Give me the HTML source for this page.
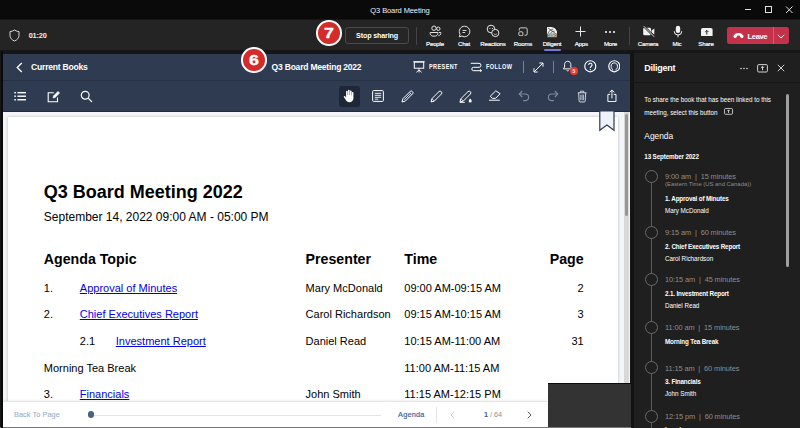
<!DOCTYPE html>
<html>
<head>
<meta charset="utf-8">
<title>Q3 Board Meeting</title>
<style>
*{box-sizing:border-box;margin:0;padding:0}
html,body{width:800px;height:428px;overflow:hidden;background:#1a1a1a;font-family:"Liberation Sans",sans-serif;}
.abs{position:absolute}
#root{position:relative;width:800px;height:428px;overflow:hidden;background:#161616}
#titlebar{left:0;top:0;width:800px;height:19.800px;background:#0a0a0a}
#titlebar .t{left:0;width:800px;top:4.600px;text-align:center;color:#f0f0f0;font-size:7.500px;line-height:11px;letter-spacing:-0.1px}
#toolbar{left:0;top:20px;width:800px;height:30.400px;background:#242424;box-shadow:0 -0.600px 0 #242424}
.lbl{position:absolute;color:#fff;-webkit-text-stroke:.18px #fff;font-size:6.1px;line-height:8px;text-align:center;width:40px;top:40px;letter-spacing:-0.2px}
.sep{position:absolute;width:1px;background:#444;top:27px;height:18px}
#app{left:3.300px;top:54px;width:627.200px;height:372.700px;background:#f4f5f7;overflow:hidden}
#h1{left:0;top:0;width:629px;height:26px;background:#2f3b50}
#h2{left:0;top:26px;width:629px;height:32.300px;background:#2f3b50;border-top:1px solid #263145}
.wt{color:#fff}
#page{left:4.700px;top:62.800px;width:610px;height:320px;background:#fff;box-shadow:0 0 2.500px rgba(60,70,90,.35)}
#doc{font-family:"Liberation Sans",sans-serif;color:#000}
#bottom{left:0;top:346.500px;width:543.300px;height:27px;background:#fff;border-top:1px solid #e3e5e8;box-shadow:0 -1px 2px rgba(0,0,0,.06)}
#panel{left:632px;top:52.500px;width:168px;height:375.500px;background:#1f1f1f}
#panel>*{margin-top:1.500px}
#panel>.tm,#panel>.tt,#panel>.pr{margin-top:2.300px}#panel>.tz{margin-top:1.800px}
.pt{position:absolute;color:#fff;white-space:nowrap}
.circ{position:absolute;border-radius:50%;background:#d42b2b;border:2.100px solid #fff;color:#fff;font-weight:bold;text-align:center;font-size:14.600px;line-height:23.800px}
.circ span{display:inline-block;position:relative;left:.6px;transform:scaleX(1.22);-webkit-text-stroke:.35px #fff}
a{color:#0000ee;text-decoration:underline}
.dh{font-size:14.200px;line-height:19px;font-weight:bold;white-space:nowrap}
.dr{font-size:11.020px;line-height:16px;white-space:nowrap}
.sm{font-size:6.300px;line-height:8px;letter-spacing:0}
.tcirc{position:absolute;left:12.800px;width:13px;height:13px;border-radius:50%;border:1px solid #6a6a6a;background:#1f1f1f}
.tm{left:33px;font-size:7.400px;line-height:10px;color:#8e8e8e;letter-spacing:-0.1px}
.tz{left:33px;font-size:5.900px;line-height:7px;color:#8e8e8e;letter-spacing:0}
.tt{left:33px;font-size:6.300px;line-height:8px;font-weight:bold;letter-spacing:-0.17px}
.pr{left:33px;font-size:6.300px;line-height:8px;letter-spacing:-0.03px}
</style>
</head>
<body>
<div id="root">
  <div id="titlebar" class="abs">
    <div class="t abs">Q3 Board Meeting</div>
    <svg class="abs" style="left:735px;top:0" width="65" height="20" viewBox="0 0 65 20" fill="none" stroke="#e0e0e0" stroke-width="1">
      <path d="M10 9.5h6"/><rect x="30.5" y="6.500" width="6" height="6"/><path d="M51 6.500l6.500 6.500M57.500 6.500l-6.500 6.500"/>
    </svg>
  </div>
  <div id="toolbar" class="abs">
    <!-- shield + timer -->
    <svg class="abs" style="left:9px;top:9px" width="11" height="13" viewBox="0 0 11 13" fill="none" stroke="#d6d6d6" stroke-width="1"><path d="M5.500 1C4.200 2 2.600 2.500 1 2.600V6.500c0 2.600 1.800 4.400 4.500 5.500 2.700-1.100 4.500-2.900 4.500-5.500V2.600C8.400 2.500 6.800 2 5.500 1z"/></svg>
    <div class="abs" style="left:28.700px;top:12.400px;color:#f0f0f0;font-size:7.300px;line-height:8px;font-weight:bold;letter-spacing:-0.15px">01:20</div>
    <div class="circ" style="left:316px;top:0px;width:25.700px;height:25.700px"><span>7</span></div>
    <div class="abs" style="left:345px;top:7px;width:64px;height:17px;border:1px solid #4a4a4a;border-radius:3px;background:#262626;color:#fff;font-size:7.150px;font-weight:bold;line-height:16.600px;text-align:center;letter-spacing:-0.15px">Stop sharing</div>
    <div class="sep" style="left:416px;top:7px"></div>
    <div class="sep" style="left:629px;top:7px"></div>
    <!-- People -->
    <svg class="abs" style="left:429px;top:5px" width="13" height="12" viewBox="0 0 13 12" fill="none" stroke="#e6e6e6" stroke-width="1"><circle cx="5" cy="3.200" r="2.200"/><circle cx="9.300" cy="3.800" r="1.700"/><path d="M1.200 7.500h7.600v1.200c0 1.500-1.600 2.500-3.800 2.500s-3.800-1-3.800-2.500z"/><path d="M9.800 7.500h2v1c0 1.200-.9 2-2.300 2.100"/></svg>
    <div class="lbl" style="left:415px;top:19.500px">People</div>
    <!-- Chat -->
    <svg class="abs" style="left:458px;top:5px" width="13" height="13" viewBox="0 0 13 13" fill="none" stroke="#e6e6e6" stroke-width="1"><path d="M6.500 1.200a5.300 5.300 0 1 1-2.600 9.900L1.300 11.800l.7-2.600A5.300 5.300 0 0 1 6.500 1.200z"/><path d="M4.500 5.500h4M4.500 7.500h2.600" stroke-width=".9"/></svg>
    <div class="lbl" style="left:444px;top:19.500px">Chat</div>
    <!-- Reactions -->
    <svg class="abs" style="left:486px;top:4px" width="14" height="14" viewBox="0 0 14 14" fill="none" stroke="#e6e6e6" stroke-width="1"><circle cx="5" cy="5" r="3.800"/><circle cx="9.300" cy="9" r="3.600" fill="#242424"/><path d="M7.800 9.800c.8.900 2.200.9 3 0" stroke-width=".8"/><path d="M3.300 4.500h1.200M5.800 4.500H7" stroke-width=".8"/></svg>
    <div class="lbl" style="left:473px;top:19.500px">Reactions</div>
    <!-- Rooms -->
    <svg class="abs" style="left:517.700px;top:6.700px" width="10.500" height="9.600" viewBox="0 0 12 11" fill="none" stroke="#e6e6e6" stroke-width="1"><path d="M1.500 4V2.500a1.500 1.500 0 0 1 1.500-1.500h6a1.500 1.500 0 0 1 1.500 1.500v5.500a1.500 1.500 0 0 1-1.500 1.500H7.500"/><rect x="1" y="5.500" width="4.500" height="4.500" rx="1"/></svg>
    <div class="lbl" style="left:503px;top:19.500px">Rooms</div>
    <!-- Diligent -->
    <svg class="abs" style="left:546.500px;top:7px" width="10.600" height="10.800" viewBox="0 0 10.600 10.800"><path d="M0 .6A.6 .6 0 0 1 .6 0H4.200C7.800 .3 10.200 2.800 10.400 6.800H0z" fill="#f2f2f2"/><path d="M1.200 1.200L8.600 6.600M1.300 6.500C1.600 4 3.400 2.300 6.200 2.300M3.600 6.600C3.900 5.200 5 4.300 7.600 4.300" fill="none" stroke="#4a4a4a" stroke-width=".8"/><rect x="0" y="7.100" width="10.600" height="3.700" rx=".6" fill="#4a4a4a"/><text x="5.300" y="10" font-size="3.100" fill="#e8e8e8" text-anchor="middle" font-family="Liberation Sans, sans-serif" font-weight="bold">DEMO</text></svg>
    <div class="lbl" style="left:532px;top:19.500px">Diligent</div>
    <div class="abs" style="left:543.500px;top:29px;width:17px;height:1.800px;background:#7579dc;border-radius:1px"></div>
    <!-- Apps -->
    <svg class="abs" style="left:575.400px;top:6px" width="11" height="11" viewBox="0 0 11 11" fill="none" stroke="#e6e6e6" stroke-width="1"><path d="M5.500 .5v10M.5 5.500h10"/></svg>
    <div class="lbl" style="left:561.200px;top:19.500px">Apps</div>
    <!-- More -->
    <svg class="abs" style="left:604px;top:10px" width="12" height="4" viewBox="0 0 12 4" fill="#f0f0f0"><circle cx="2" cy="2" r="1.100"/><circle cx="6" cy="2" r="1.100"/><circle cx="10" cy="2" r="1.100"/></svg>
    <div class="lbl" style="left:590.500px;top:19.500px">More</div>
    <!-- Camera -->
    <svg class="abs" style="left:642px;top:5.200px" width="14" height="13" viewBox="0 0 14 13"><path d="M1.200 4a1.300 1.300 0 0 1 1.300-1.300h5.200a1.300 1.300 0 0 1 1.300 1.300v5a1.300 1.300 0 0 1-1.300 1.300H2.500A1.300 1.300 0 0 1 1.200 9z" fill="#f2f2f2"/><path d="M9.500 5.400l2.800-1.900v6l-2.800-1.900z" fill="#f2f2f2"/><path d="M2.200 1.600l9.800 10" stroke="#242424" stroke-width="2.200"/><path d="M1.800 1.200l10.400 10.600" stroke="#f2f2f2" stroke-width=".9"/></svg>
    <div class="lbl" style="left:628px;top:19.500px">Camera</div>
    <!-- Mic -->
    <svg class="abs" style="left:672.700px;top:5.200px" width="10" height="13" viewBox="0 0 10 13"><rect x="2.800" y=".8" width="4.400" height="7.200" rx="2.200" fill="#f2f2f2"/><path d="M1.200 6.200a3.800 3.800 0 0 0 7.600 0M5 10v2.200" fill="none" stroke="#f2f2f2" stroke-width="1"/></svg>
    <div class="lbl" style="left:657px;top:19.500px">Mic</div>
    <!-- Share -->
    <svg class="abs" style="left:701.200px;top:7.500px" width="11.600" height="8.800" viewBox="0 0 11.600 8.800"><rect x="0" y="0" width="11.600" height="8.800" rx="1.700" fill="#f2f2f2"/><path d="M5.800 6.600V2.600M4.200 4l1.600-1.600 1.600 1.600" fill="none" stroke="#242424" stroke-width="1"/></svg>
    <div class="lbl" style="left:686px;top:19.500px">Share</div>
    <!-- Leave -->
    <div class="abs" style="left:727.300px;top:7.400px;width:62.200px;height:16.600px;background:#c4314b;border-radius:2.500px"></div>
    <div class="abs" style="left:773px;top:7.400px;width:1px;height:16.600px;background:#d55f74"></div>
    <svg class="abs" style="left:733px;top:12.300px" width="11" height="7" viewBox="0 0 11 7"><path d="M.6 3.700C1.800 1.700 3.600 1 5.500 1s3.700.7 4.900 2.700c.3.600.1 1.300-.3 1.700l-.6.500c-.4.300-.9.200-1.300-.1L7.300 5c-.3-.3-.4-.7-.3-1.100-.9-.4-2.100-.4-3 0 .1.400 0 .8-.3 1.100l-.9.800c-.4.300-.9.400-1.300.1l-.6-.5C.5 5 .3 4.300.6 3.700z" fill="#fff"/></svg>
    <div class="abs" style="left:747.600px;top:11.900px;color:#fff;font-size:7.700px;font-weight:bold;line-height:9px;letter-spacing:-0.45px">Leave</div>
    <svg class="abs" style="left:776.600px;top:13.500px" width="8" height="5" viewBox="0 0 8 5" fill="none" stroke="#fff" stroke-width="1"><path d="M.8 .8L4 4 7.200 .8"/></svg>
  </div>

  <div id="app" class="abs">
    <div id="h1" class="abs">
      <svg class="abs" style="left:12.500px;top:8px" width="7" height="11" viewBox="0 0 7 11" fill="none" stroke="#fff" stroke-width="1.300"><path d="M5.800 1L1.200 5.500 5.800 10"/></svg>
      <div class="abs wt" style="left:27.800px;top:7.500px;font-size:8.600px;line-height:11px;font-weight:bold;letter-spacing:-0.25px;white-space:nowrap">Current Books</div>
      <div class="abs wt" id="ttl" style="left:268.300px;top:7.500px;font-size:8.500px;line-height:11px;font-weight:bold;letter-spacing:-0.2px;white-space:nowrap">Q3 Board Meeting 2022</div>
      <!-- present -->
      <svg class="abs" style="left:410px;top:7px" width="12" height="12" viewBox="0 0 12 12" fill="none" stroke="#fff" stroke-width="1"><path d="M.3 .8h11.400"/><rect x="1.300" y="1" width="9.400" height="6.200"/><path d="M6 7.200v2M6 9l-2.600 2.300M6 9l2.600 2.300M6 9v2.500" stroke-width=".9"/></svg>
      <div class="abs wt" style="left:425.900px;top:8.600px;font-size:7px;line-height:8px;font-weight:bold;letter-spacing:.5px;white-space:nowrap;transform:scaleX(.79);transform-origin:0 0">PRESENT</div>
      <!-- follow -->
      <svg class="abs" style="left:467px;top:7.800px" width="13" height="10" viewBox="0 0 13 10" fill="none" stroke="#fff" stroke-width="1"><path d="M.8 1.300h8.200a2 2 0 0 1 0 4H3.500a1.700 1.700 0 0 0 0 3.400h8"/><path d="M10 7.200l1.600 1.500L10 10.200" stroke-width=".9"/></svg>
      <div class="abs wt" style="left:483.100px;top:8.600px;font-size:7px;line-height:8px;font-weight:bold;letter-spacing:.5px;white-space:nowrap;transform:scaleX(.79);transform-origin:0 0">FOLLOW</div>
      <div class="abs" style="left:520px;top:7px;width:1px;height:12px;background:#76809a"></div>
      <!-- expand -->
      <svg class="abs" style="left:529.500px;top:7.500px" width="11" height="11" viewBox="0 0 11 11" fill="none" stroke="#fff" stroke-width="1"><path d="M1 10L10 1M6.300 1H10v3.700M1 6.300V10h3.700"/></svg>
      <div class="abs" style="left:550px;top:7px;width:1px;height:12px;background:#76809a"></div>
      <!-- bell -->
      <svg class="abs" style="left:558.500px;top:6.100px" width="11.400" height="12.600" viewBox="0 0 12 13" fill="none" stroke="#fff" stroke-width="1"><path d="M6 1.200c-2 0-3.300 1.500-3.300 3.500v2.600L1.500 9.200h9L9.300 7.300V4.700C9.300 2.700 8 1.200 6 1.200z"/><path d="M4.800 10.800c.3.700 2.100.7 2.400 0"/></svg>
      <div class="abs" style="left:566.400px;top:12.600px;width:8.400px;height:8.400px;border-radius:50%;background:#f0392b;color:#fff;font-size:5px;line-height:8.400px;text-align:center;font-weight:bold">5</div>
      <!-- help -->
      <svg class="abs" style="left:581.200px;top:6.100px" width="12.600" height="12.600" viewBox="0 0 13 13" fill="none" stroke="#fff" stroke-width="1.200"><circle cx="6.500" cy="6.500" r="5.700"/><path d="M4.800 5.200a1.750 1.750 0 1 1 2.600 1.500c-.6.400-.9.700-.9 1.500" stroke-width="1.100"/><circle cx="6.500" cy="9.900" r=".7" fill="#fff" stroke="none"/></svg>
      <!-- user -->
      <svg class="abs" style="left:604.300px;top:6.100px" width="12.600" height="12.600" viewBox="0 0 13 13" fill="none" stroke="#fff" stroke-width="1.200"><circle cx="6.500" cy="6.500" r="5.700"/><path d="M4.600 10.800v-1.300c-1.200-.9-1.400-2.200-1.400-3.200 0-1.900 1.400-3.300 3.300-3.300s3.300 1.400 3.300 3.300c0 1-.2 2.300-1.400 3.200v1.300" stroke-width="1"/></svg>
    </div>
    <div id="h2" class="abs">
      <!-- list -->
      <svg class="abs" style="left:10.300px;top:10px" width="12.400" height="10.500" viewBox="0 0 13 11" fill="#fff"><rect x=".3" y="1" width="1.700" height="1.500"/><rect x=".3" y="4.700" width="1.700" height="1.500"/><rect x=".3" y="8.400" width="1.700" height="1.500"/><rect x="3.600" y="1" width="9" height="1.500"/><rect x="3.600" y="4.700" width="9" height="1.500"/><rect x="3.600" y="8.400" width="9" height="1.500"/></svg>
      <!-- edit -->
      <svg class="abs" style="left:43.500px;top:8.500px" width="14" height="13" viewBox="0 0 14 13" fill="none" stroke="#fff" stroke-width="1.100"><path d="M10.500 7.500v4.300H1.200V2.800h5.600"/><path d="M6 8l.6-2.200L11 1.400l1.600 1.600L8.200 7.400z" fill="#fff" stroke-width=".6"/></svg>
      <!-- search -->
      <svg class="abs" style="left:77px;top:9px" width="13" height="13" viewBox="0 0 13 13" fill="none" stroke="#fff" stroke-width="1.200"><circle cx="5.200" cy="5.200" r="3.900"/><path d="M8.200 8.200L12 12"/></svg>
      <!-- hand -->
      <div class="abs" style="left:336px;top:5px;width:20.500px;height:20.500px;background:#1e2737;border-radius:3px"></div>
      <svg class="abs" style="left:339.600px;top:7.600px" width="12" height="14" viewBox="0 0 12 14" fill="#fff"><path d="M3.100 7V2.500a.8.800 0 0 1 1.600 0V6h.35V1.500a.8.800 0 0 1 1.600 0V6H7V2.200a.8.800 0 0 1 1.600 0V6.500h.35V3.800a.75.750 0 0 1 1.500 0V9c0 2.600-1.700 4.300-4 4.300-1.700 0-2.700-.7-3.500-2L.9 7.900C.5 7.200 1.400 6.500 2 7.200l1.100 1.300z"/></svg>
      <!-- note -->
      <svg class="abs" style="left:369px;top:8.500px" width="12" height="12" viewBox="0 0 12 12" fill="none" stroke="#fff" stroke-width="1"><rect x=".6" y=".6" width="10.800" height="10.800" rx="1"/><path d="M2.800 3.300h6.400M2.800 5.300h6.400M2.800 7.300h6.400M2.800 9.200h3.500" stroke-width=".9"/></svg>
      <!-- pen -->
      <svg class="abs" style="left:397.500px;top:9px" width="13" height="13" viewBox="0 0 13 13" fill="none" stroke="#fff" stroke-width="1"><path d="M1 12l.9-3.300 7.300-7.300a1.400 1.400 0 0 1 2 0l.4.400a1.400 1.400 0 0 1 0 2L4.300 11.100z"/><path d="M3.200 9.800l6.600-6.600" stroke-width=".8"/><path d="M8.300 2.300l2.400 2.400" stroke-width=".8"/></svg>
      <!-- pencil -->
      <svg class="abs" style="left:426.500px;top:9px" width="13" height="13" viewBox="0 0 13 13" fill="none" stroke="#fff" stroke-width="1"><path d="M1 12l.9-3.300 7.100-7.100a1.700 1.700 0 0 1 2.400 2.400L4.300 11.100z"/><path d="M1.900 8.700l2.400 2.400" stroke-width=".8"/></svg>
      <!-- highlighter -->
      <svg class="abs" style="left:455.500px;top:9px" width="14" height="13" viewBox="0 0 14 13" fill="none" stroke="#fff" stroke-width="1"><path d="M1 12l.9-3.300 7.100-7.100a1.700 1.700 0 0 1 2.400 2.400L4.300 11.100z"/><path d="M1.900 8.700l2.400 2.400" stroke-width=".8"/><path d="M.8 12.400h5" stroke-width=".9"/><path d="M11.200 8.600c.9 1 1.500 1.700 1.500 2.500a1.500 1.500 0 0 1-3 0c0-.8.600-1.500 1.500-2.500z" fill="#fff" stroke="none"/></svg>
      <!-- eraser -->
      <svg class="abs" style="left:485px;top:9px" width="14" height="12" viewBox="0 0 14 12" fill="none" stroke="#fff" stroke-width="1"><path d="M2.200 6.300L7.800 .8l4.300 2.900L7.700 8.300H4.300z"/><path d="M1 10.200h10.800"/></svg>
      <!-- undo -->
      <svg class="abs" style="left:514.800px;top:8.800px" width="12" height="12" viewBox="0 0 12 12" fill="none" stroke="#7f8aa0" stroke-width="1.100"><path d="M4.200 1L1.200 4l3 3"/><path d="M1.500 4h5.800a3.300 3.300 0 0 1 0 6.600H5.200"/></svg>
      <!-- redo -->
      <svg class="abs" style="left:543.800px;top:8.800px" width="12" height="12" viewBox="0 0 12 12" fill="none" stroke="#7f8aa0" stroke-width="1.100"><path d="M7.800 1l3 3-3 3"/><path d="M10.500 4H4.700a3.300 3.300 0 0 0 0 6.600h2.100"/></svg>
      <!-- trash -->
      <svg class="abs" style="left:574px;top:8.800px" width="10.300" height="13" viewBox="0 0 11 14" fill="none" stroke="#dfe3ea" stroke-width="1"><path d="M.8 3h9.400M3.800 2.700V1.300h3.400v1.400"/><path d="M1.700 3.200l.5 8.600c0 .6.500 1.100 1.100 1.100h4.400c.6 0 1.100-.5 1.100-1.100l.5-8.600"/><path d="M4 5v6M5.500 5v6M7 5v6" stroke-width=".8"/></svg>
      <!-- share -->
      <svg class="abs" style="left:603.400px;top:7.700px" width="9.900" height="13.500" viewBox="0 0 11 15" fill="none" stroke="#fff" stroke-width="1.100"><path d="M3.500 6H1v8h9V6H7.500"/><path d="M5.500 10.500V1.200M2.800 3.800L5.500 1.200l2.700 2.600"/></svg>
    </div>
    <div id="page" class="abs">
      <div id="doc" class="abs" style="left:.3px;top:.2px">
        <div class="abs" id="dtitle" style="left:35.500px;top:63.400px;font-size:18px;line-height:24px;font-weight:bold;white-space:nowrap">Q3 Board Meeting 2022</div>
        <div class="abs" id="dsub" style="left:35.500px;top:91.800px;font-size:12px;line-height:16px;white-space:nowrap">September 14, 2022 09:00 AM - 05:00 PM</div>
        <div class="abs dh" style="left:35.500px;top:132.800px">Agenda Topic</div>
        <div class="abs dh" style="left:297.300px;top:132.800px">Presenter</div>
        <div class="abs dh" style="left:396px;top:132.800px">Time</div>
        <div class="abs dh" style="left:475.400px;width:100px;text-align:right;top:132.800px">Page</div>

        <div class="abs dr" style="left:35.500px;top:162.800px">1.</div>
        <div class="abs dr" style="left:71.500px;top:162.800px"><a>Approval of Minutes</a></div>
        <div class="abs dr" style="left:297.300px;top:162.800px">Mary McDonald</div>
        <div class="abs dr" style="left:396px;top:162.800px">09:00 AM-09:15 AM</div>
        <div class="abs dr" style="left:475.400px;width:100px;text-align:right;top:162.800px">2</div>

        <div class="abs dr" style="left:35.500px;top:189.400px">2.</div>
        <div class="abs dr" style="left:71.500px;top:189.400px"><a>Chief Executives Report</a></div>
        <div class="abs dr" style="left:297.300px;top:189.400px">Carol Richardson</div>
        <div class="abs dr" style="left:396px;top:189.400px">09:15 AM-10:15 AM</div>
        <div class="abs dr" style="left:475.400px;width:100px;text-align:right;top:189.400px">3</div>

        <div class="abs dr" style="left:71.500px;top:216.100px">2.1</div>
        <div class="abs dr" style="left:107.500px;top:216.100px"><a>Investment Report</a></div>
        <div class="abs dr" style="left:297.300px;top:216.100px">Daniel Read</div>
        <div class="abs dr" style="left:396px;top:216.100px">10:15 AM-11:00 AM</div>
        <div class="abs dr" style="left:475.400px;width:100px;text-align:right;top:216.100px">31</div>

        <div class="abs dr" style="left:35.500px;top:242.700px">Morning Tea Break</div>
        <div class="abs dr" style="left:396px;top:242.700px">11:00 AM-11:15 AM</div>

        <div class="abs dr" style="left:35.500px;top:269.300px">3.</div>
        <div class="abs dr" style="left:71.500px;top:269.300px"><a>Financials</a></div>
        <div class="abs dr" style="left:297.300px;top:269.300px">John Smith</div>
        <div class="abs dr" style="left:396px;top:269.300px">11:15 AM-12:15 PM</div>
      </div>
    </div>
    <div class="abs" style="left:620.700px;top:57.500px;width:5.200px;height:300px;background:#d8d8d8"></div>
    <div class="abs" style="left:621.700px;top:59.500px;width:3.200px;height:102.500px;background:#979797;border-radius:1.600px"></div>
    <div class="abs" style="left:0;top:57.200px;width:628px;height:1.200px;background:#1f2a3d"></div>
    <svg class="abs" style="left:595.700px;top:57px" width="17" height="21" viewBox="0 0 17 21"><path d="M.8 0V19.200L7.900 14 15 19.200V0z" fill="#eef3fb" stroke="#2c3a55" stroke-width="1.200"/></svg>
    <div id="bottom" class="abs">
      <div class="abs" style="left:10.700px;top:8.800px;font-size:7.250px;line-height:9px;color:#9db0cc;-webkit-text-stroke:.12px #9db0cc;white-space:nowrap;letter-spacing:.1px">Back To Page</div>
      <div class="abs" style="left:91px;top:13px;width:287px;height:1px;background:#d9e6f5"></div>
      <div class="abs" style="left:84.300px;top:9.800px;width:6.900px;height:6.900px;border-radius:50%;background:#4a6088"></div>
      <div class="abs" style="left:394.800px;top:8.900px;font-size:7.400px;line-height:9px;color:#3b5a9a;-webkit-text-stroke:.15px #3b5a9a;white-space:nowrap;letter-spacing:.15px">Agenda</div>
      <div class="abs" style="left:433px;top:5px;width:1px;height:16px;background:#e1e4e8"></div>
      <svg class="abs" style="left:447.100px;top:9.500px" width="5" height="8" viewBox="0 0 5 8" fill="none" stroke="#c8ccd2" stroke-width="1"><path d="M4.200 .7L1 4l3.200 3.300"/></svg>
      <div class="abs" style="left:480.800px;top:8.900px;font-size:7.200px;line-height:9px;white-space:nowrap;color:#8b8f96"><b style="color:#3b5a9a">1</b> / 64</div>
      <svg class="abs" style="left:523.700px;top:9.500px" width="5" height="8" viewBox="0 0 5 8" fill="none" stroke="#555" stroke-width="1"><path d="M.8 .7L4 4 .8 7.300"/></svg>
    </div>
  </div>
  <div class="circ" style="left:241px;top:47px;width:25.700px;height:25.700px"><span>6</span></div>
  <div class="abs" style="left:548.400px;top:382.500px;width:83px;height:46px;background:#333;border-top:1px solid #0c0c0c"></div>
  <div class="abs" style="left:0;top:426.700px;width:632px;height:2px;background:linear-gradient(#8a8a8a,#3a3a3a)"></div>
  <div class="abs" style="left:.9px;top:50.500px;width:2.400px;height:378px;background:#0a0a0a"></div>
  <div id="panel" class="abs">
    <div class="abs" style="left:-1.500px;top:-2px;width:3px;height:378px;background:#131313;margin:0"></div>
    <div class="pt" style="left:12.300px;top:8.400px;font-size:9px;line-height:12px;font-weight:bold;letter-spacing:-0.25px">Diligent</div>
    <svg class="abs" style="left:108.300px;top:12.500px" width="8" height="3" viewBox="0 0 8 3" fill="#ddd"><circle cx="1" cy="1.500" r=".8"/><circle cx="4" cy="1.500" r=".8"/><circle cx="7" cy="1.500" r=".8"/></svg>
    <svg class="abs" style="left:125.300px;top:9.600px" width="11" height="9" viewBox="0 0 11 9" fill="none" stroke="#e6e6e6" stroke-width=".9"><rect x=".6" y=".6" width="9.800" height="7.400" rx="1.200"/><path d="M5.500 6.300V2.500M3.900 3.900l1.600-1.600 1.600 1.600"/></svg>
    <svg class="abs" style="left:144.700px;top:9.800px" width="8" height="8" viewBox="0 0 8 8" fill="none" stroke="#e6e6e6" stroke-width=".9"><path d="M.8 .8l6.400 6.400M7.200 .8L.8 7.200"/></svg>
    <div class="abs" style="left:0;top:28px;width:168px;height:1px;background:#161616"></div>
    <div class="pt sm" style="left:12.300px;top:42.200px">To share the book that has been linked to this</div>
    <div class="pt sm" style="left:12.300px;top:54.500px">meeting, select this button</div>
    <svg class="abs" style="left:91.700px;top:54.200px" width="9" height="7" viewBox="0 0 9 7" fill="none" stroke="#e6e6e6" stroke-width=".8"><rect x=".5" y=".5" width="8" height="5.800" rx="1"/><path d="M4.500 5V2M3.300 3.100l1.200-1.200 1.200 1.200"/></svg>
    <div class="pt" style="left:12.300px;top:77px;font-size:8.400px;line-height:11px">Agenda</div>
    <div class="pt" style="left:12.300px;top:99px;font-size:6.300px;line-height:8px;font-weight:bold;letter-spacing:-0.15px">13 September 2022</div>
    <div class="abs" style="left:18.800px;top:116px;width:1px;height:260px;background:#5a5a5a"></div>
    <div class="tcirc" style="top:115.7px"></div>
    <div class="pt tm" style="top:117.2px">9:00 am &nbsp;|&nbsp; 15 minutes</div>
    <div class="pt tz" style="top:127.2px">(Eastern Time (US and Canada))</div>
    <div class="pt tt" style="top:140.2px">1. Approval of Minutes</div>
    <div class="pt pr" style="top:152.5px">Mary McDonald</div>
    <div class="tcirc" style="top:172.0px"></div>
    <div class="pt tm" style="top:173.5px">9:15 am &nbsp;|&nbsp; 60 minutes</div>
    <div class="pt tt" style="top:188.0px">2. Chief Executives Report</div>
    <div class="pt pr" style="top:200.3px">Carol Richardson</div>
    <div class="tcirc" style="top:219.0px"></div>
    <div class="pt tm" style="top:220.5px">10:15 am &nbsp;|&nbsp; 45 minutes</div>
    <div class="pt tt" style="top:235.0px">2.1. Investment Report</div>
    <div class="pt pr" style="top:247.3px">Daniel Read</div>
    <div class="tcirc" style="top:267.0px"></div>
    <div class="pt tm" style="top:268.5px">11:00 am &nbsp;|&nbsp; 15 minutes</div>
    <div class="pt tt" style="top:283.0px">Morning Tea Break</div>
    <div class="tcirc" style="top:307.3px"></div>
    <div class="pt tm" style="top:308.8px">11:15 am &nbsp;|&nbsp; 60 minutes</div>
    <div class="pt tt" style="top:323.3px">3. Financials</div>
    <div class="pt pr" style="top:335.6px">John Smith</div>
    <div class="tcirc" style="top:355.5px"></div>
    <div class="pt tm" style="top:357px">12:15 pm &nbsp;|&nbsp; 60 minutes</div>
    <div class="pt tt" style="top:371.5px">Lunch</div>
    <div class="abs" style="left:153.800px;top:40.300px;width:3.200px;height:172.800px;background:#a0a0a0;border-radius:1.600px"></div>
  </div>
</div>
</body>
</html>
